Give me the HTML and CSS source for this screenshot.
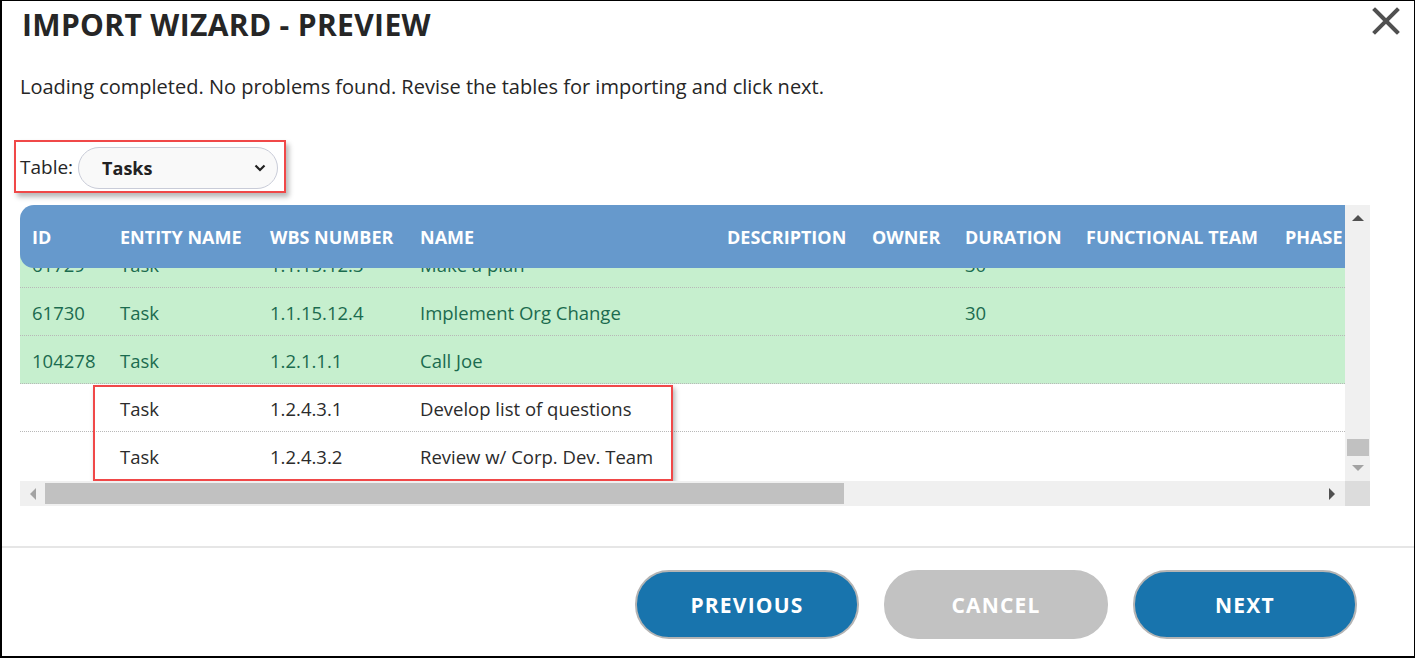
FILE: index.html
```html
<!DOCTYPE html>
<html lang="en">
<head>
<meta charset="utf-8">
<title>Import Wizard - Preview</title>
<link rel="stylesheet" href="styles.css">
</head>
<body>
<div class="dialog">
  <div class="top">
    <h1 class="title">IMPORT WIZARD - PREVIEW</h1>
    <button class="close" aria-label="Close">
      <svg width="28" height="28" viewBox="0 0 28 28"><path d="M3 3 L25 25 M25 3 L3 25" stroke="#505050" stroke-width="4" stroke-linecap="square"/></svg>
    </button>
  </div>
  <p class="msg">Loading completed. No problems found. Revise the tables for importing and click next.</p>
  <div class="picker-row">
    <div class="picker">
      <span class="picker-label">Table:</span>
      <div class="select">
        <span class="select-value">Tasks</span>
        <svg class="chev" width="12" height="8" viewBox="0 0 12 8"><path d="M1.5 1.5 L6 6 L10.5 1.5" fill="none" stroke="#222" stroke-width="2.2"/></svg>
      </div>
    </div>
  </div>

  <div class="grid">
    <div class="grid-main">
      <div class="viewport">
        <div class="rows">
          <div class="row ok">
            <div class="c">61729</div><div class="c">Task</div><div class="c">1.1.15.12.3</div><div class="c">Make a plan</div><div class="c"></div><div class="c"></div><div class="c">30</div><div class="c"></div><div class="c"></div>
          </div>
          <div class="row ok">
            <div class="c">61730</div><div class="c">Task</div><div class="c">1.1.15.12.4</div><div class="c">Implement Org Change</div><div class="c"></div><div class="c"></div><div class="c">30</div><div class="c"></div><div class="c"></div>
          </div>
          <div class="row ok">
            <div class="c">104278</div><div class="c">Task</div><div class="c">1.2.1.1.1</div><div class="c">Call Joe</div><div class="c"></div><div class="c"></div><div class="c"></div><div class="c"></div><div class="c"></div>
          </div>
          <div class="row">
            <div class="c"></div><div class="c">Task</div><div class="c">1.2.4.3.1</div><div class="c">Develop list of questions</div><div class="c"></div><div class="c"></div><div class="c"></div><div class="c"></div><div class="c"></div>
          </div>
          <div class="row last">
            <div class="c"></div><div class="c">Task</div><div class="c">1.2.4.3.2</div><div class="c">Review w/ Corp. Dev. Team</div><div class="c"></div><div class="c"></div><div class="c"></div><div class="c"></div><div class="c"></div>
          </div>
        </div>
        <div class="head">
          <div class="h">ID</div><div class="h">ENTITY NAME</div><div class="h">WBS NUMBER</div><div class="h">NAME</div><div class="h">DESCRIPTION</div><div class="h">OWNER</div><div class="h">DURATION</div><div class="h">FUNCTIONAL TEAM</div><div class="h">PHASE</div>
        </div>
        <div class="mark"></div>
      </div>
      <div class="vscroll">
        <span class="arr up"></span>
        <span class="vtrack"><span class="vthumb"></span></span>
        <span class="arr down"></span>
      </div>
    </div>
    <div class="grid-foot">
      <div class="hscroll">
        <span class="arr left"></span>
        <span class="htrack"><span class="hthumb"></span></span>
        <span class="arr right"></span>
      </div>
      <div class="corner"></div>
    </div>
  </div>

  <div class="divider"></div>
  <div class="footer">
    <button class="btn primary">PREVIOUS</button>
    <button class="btn disabled">CANCEL</button>
    <button class="btn primary">NEXT</button>
  </div>
</div>
</body>
</html>
```

FILE: styles.css
```css
* { box-sizing: border-box; }
html, body { margin: 0; padding: 0; background: #fff; }
body { font-family: "Open Sans", "Noto Sans", sans-serif; color: #222; }

.dialog {
  width: 1415px;
  height: 658px;
  border-top: 1px solid #000;
  border-left: 2px solid #000;
  border-right: 1px solid #000;
  border-bottom: 2px solid #000;
  display: flex;
  flex-direction: column;
  overflow: hidden;
}

.top {
  display: flex;
  justify-content: space-between;
  align-items: flex-start;
  height: 52px;
}
.title {
  margin: 0;
  padding: 4px 0 0 20px;
  font-size: 30px;
  font-weight: 700;
  color: #262626;
  letter-spacing: 0.35px;
  line-height: 40px;
}
.close {
  border: 0;
  background: none;
  padding: 0;
  margin: 6px 14px 0 0;
  width: 28px;
  height: 28px;
  cursor: pointer;
}
.close svg { display: block; }

.msg {
  margin: 0;
  padding: 20px 0 0 18px;
  height: 86px;
  font-size: 20px;
  line-height: 28px;
  color: #262626;
}

.picker-row {
  padding: 1px 0 0 12px;
  height: 66px;
}
.picker {
  display: inline-flex;
  align-items: center;
  gap: 5px;
  height: 53px;
  padding: 0 6px 0 4px;
  border: 2px solid #f04848;
  box-shadow: 3px 4px 5px rgba(0,0,0,0.28);
  background: #fff;
}
.picker-label {
  font-size: 19px;
  color: #262626;
}
.select {
  width: 200px;
  height: 42px;
  margin-top: 2px;
  border: 1px solid #c9ccd8;
  border-radius: 21px;
  background: #f9f9f9;
  display: flex;
  align-items: center;
  justify-content: space-between;
  padding: 0 11px 0 23px;
}
.select-value {
  font-size: 18px;
  font-weight: 700;
  color: #222;
}
.chev { display: block; }

.grid {
  margin-left: 18px;
  width: 1350px;
  display: flex;
  flex-direction: column;
}
.grid-main {
  display: flex;
  height: 276px;
}
.viewport {
  position: relative;
  width: 1325px;
  height: 276px;
  overflow: hidden;
}
.rows {
  padding-top: 35px;
}
.row, .head {
  display: grid;
  grid-template-columns: 88px 150px 150px 307px 145px 93px 121px 199px 130px;
  width: 1383px;
}
.row {
  height: 48px;
  border-bottom: 1px dotted #b8b8b8;
  color: #2b2b2b;
  background: #fff;
}
.row.last { border-bottom: 0; }
.row.ok {
  background: #c6efce;
  color: #1b6b4f;
}
.c {
  padding-left: 12px;
  font-size: 18.5px;
  line-height: 49px;
  white-space: nowrap;
}
.head {
  position: absolute;
  top: 0;
  left: 0;
  height: 63px;
  background: #6699cc;
  border-radius: 14px 0 0 14px;
  align-items: center;
}
.h {
  padding-left: 12px;
  font-size: 18px;
  font-weight: 700;
  color: #fff;
  white-space: nowrap;
}
.mark {
  position: absolute;
  left: 73px;
  top: 180px;
  width: 580px;
  height: 96px;
  border: 2px solid #f04848;
  box-shadow: 2px 3px 5px rgba(0,0,0,0.3);
}

.vscroll {
  width: 25px;
  height: 276px;
  background: #f0f0f0;
  display: flex;
  flex-direction: column;
  align-items: center;
}
.vtrack {
  flex: 1;
  width: 100%;
  position: relative;
}
.vthumb {
  position: absolute;
  left: 2px;
  right: 1px;
  bottom: 2px;
  height: 17px;
  background: #c1c1c1;
}
.arr { display: block; width: 0; height: 0; }
.arr.up {
  margin: 10px 0 7px;
  border-left: 6px solid transparent;
  border-right: 6px solid transparent;
  border-bottom: 6px solid #505050;
}
.arr.down {
  margin: 7px 0 10px;
  border-left: 6px solid transparent;
  border-right: 6px solid transparent;
  border-top: 6px solid #a3a3a3;
}

.grid-foot {
  display: flex;
  height: 25px;
}
.hscroll {
  width: 1325px;
  background: #f0f0f0;
  display: flex;
  align-items: center;
}
.htrack {
  flex: 1;
  height: 100%;
  position: relative;
}
.hthumb {
  position: absolute;
  left: 2px;
  top: 2px;
  bottom: 2px;
  width: 799px;
  background: #c1c1c1;
}
.arr.left {
  margin: 0 7px 0 10px;
  border-top: 6px solid transparent;
  border-bottom: 6px solid transparent;
  border-right: 6px solid #a3a3a3;
}
.arr.right {
  margin: 0 10px 0 7px;
  border-top: 6px solid transparent;
  border-bottom: 6px solid transparent;
  border-left: 6px solid #505050;
}
.corner {
  width: 25px;
  background: #dcdcdc;
}

.divider {
  margin-top: 40px;
  height: 2px;
  background: #e6e6e6;
}
.footer {
  display: flex;
  justify-content: flex-end;
  gap: 25px;
  padding: 22px 57px 0 0;
}
.btn {
  width: 224px;
  height: 69px;
  border-radius: 34px;
  font-family: "Open Sans", "Noto Sans", sans-serif;
  font-size: 21px;
  font-weight: 700;
  letter-spacing: 1.2px;
  color: #fff;
  cursor: pointer;
}
.btn.primary {
  background: #1874ad;
  border: 2px solid #b4b4b4;
}
.btn.disabled {
  background: #c2c2c2;
  border: 2px solid #c2c2c2;
}
```
